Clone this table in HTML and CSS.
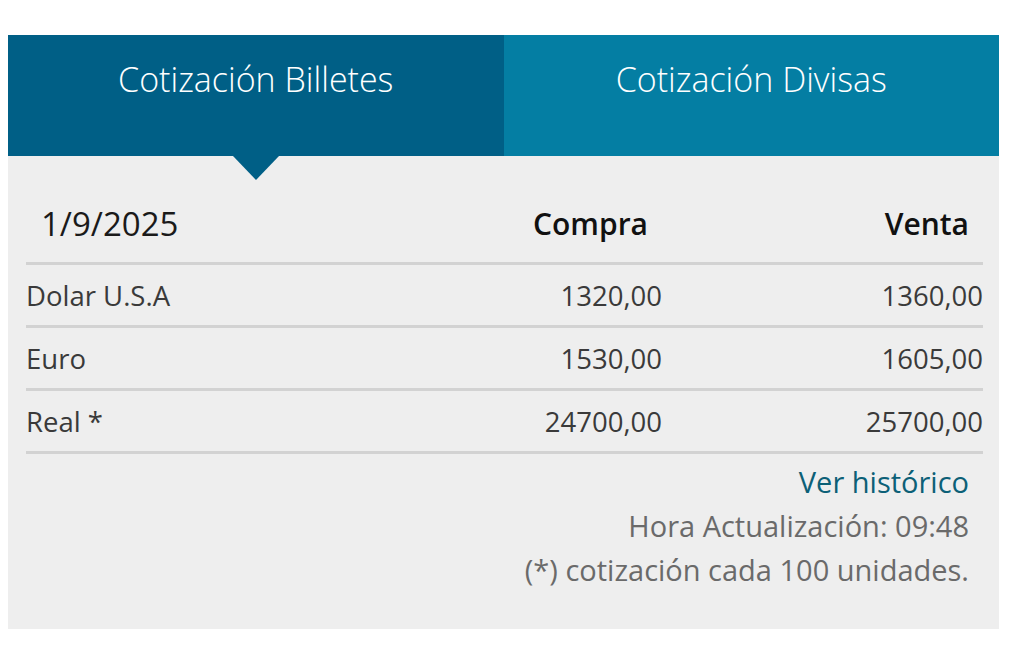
FILE: index.html
```html
<!DOCTYPE html>
<html lang="es">
<head>
<meta charset="utf-8">
<title>Cotizaciones</title>
<link rel="stylesheet" href="styles.css">
</head>
<body>
<div class="panel">
  <div class="tabs">
    <div class="tab tab-active">Cotización Billetes</div>
    <div class="tab">Cotización Divisas</div>
  </div>
  <div class="content">
    <div class="table">
      <div class="row head">
        <div class="cell date">1/9/2025</div>
        <div class="cell num hcol">Compra</div>
        <div class="cell num hcol">Venta</div>
      </div>
      <div class="row">
        <div class="cell">Dolar U.S.A</div>
        <div class="cell num">1320,00</div>
        <div class="cell num">1360,00</div>
      </div>
      <div class="row">
        <div class="cell">Euro</div>
        <div class="cell num">1530,00</div>
        <div class="cell num">1605,00</div>
      </div>
      <div class="row">
        <div class="cell">Real *</div>
        <div class="cell num">24700,00</div>
        <div class="cell num">25700,00</div>
      </div>
    </div>
    <div class="foot">
      <a class="link" href="#">Ver histórico</a>
      <div class="note">Hora Actualización: 09:48</div>
      <div class="note">(*) cotización cada 100 unidades.</div>
    </div>
  </div>
</div>
</body>
</html>
```
FILE: styles.css
```css
html, body {
  margin: 0;
  padding: 0;
  background: #ffffff;
}
body {
  font-family: "Open Sans", "Noto Sans", sans-serif;
  padding: 35px 25px 0 8px;
}
.panel {
  width: 991px;
  background: #eeeeee;
  padding-bottom: 37px;
}
.tabs {
  display: flex;
  height: 121px;
}
.tab {
  flex: 1;
  display: flex;
  justify-content: center;
  padding-top: 21px;
  box-sizing: border-box;
  color: #ffffff;
  font-size: 34px;
  font-weight: 300;
  line-height: 46px;
  background: #047ea3;
  position: relative;
}
.tab-active {
  background: #005f86;
}
.tab-active::after {
  content: "";
  position: absolute;
  left: 50%;
  bottom: -24px;
  margin-left: -23px;
  border-left: 23px solid transparent;
  border-right: 23px solid transparent;
  border-top: 24px solid #005f86;
}
.content {
  padding: 0 16px 0 18px;
}
.row {
  display: grid;
  grid-template-columns: 1fr 262px 321px;
  align-items: center;
  height: 60px;
  border-bottom: 3px solid #d2d2d2;
  font-size: 27.5px;
  color: #3a3a3a;
}
.row.head {
  height: 109px;
  padding-top: 28px;
  box-sizing: border-box;
  font-size: 30px;
  color: #111111;
}
.date {
  padding-left: 15px;
  font-size: 33px;
  font-weight: 400;
  color: #1a1a1a;
}
.num {
  text-align: right;
}
.hcol {
  font-weight: 600;
  padding-right: 14px;
}
.foot {
  display: flex;
  flex-direction: column;
  align-items: flex-end;
  padding: 6px 14px 0 0;
  font-size: 29px;
  line-height: 44px;
}
.link {
  color: #0c6077;
  text-decoration: none;
}
.note {
  color: #6a6a6a;
}
```
